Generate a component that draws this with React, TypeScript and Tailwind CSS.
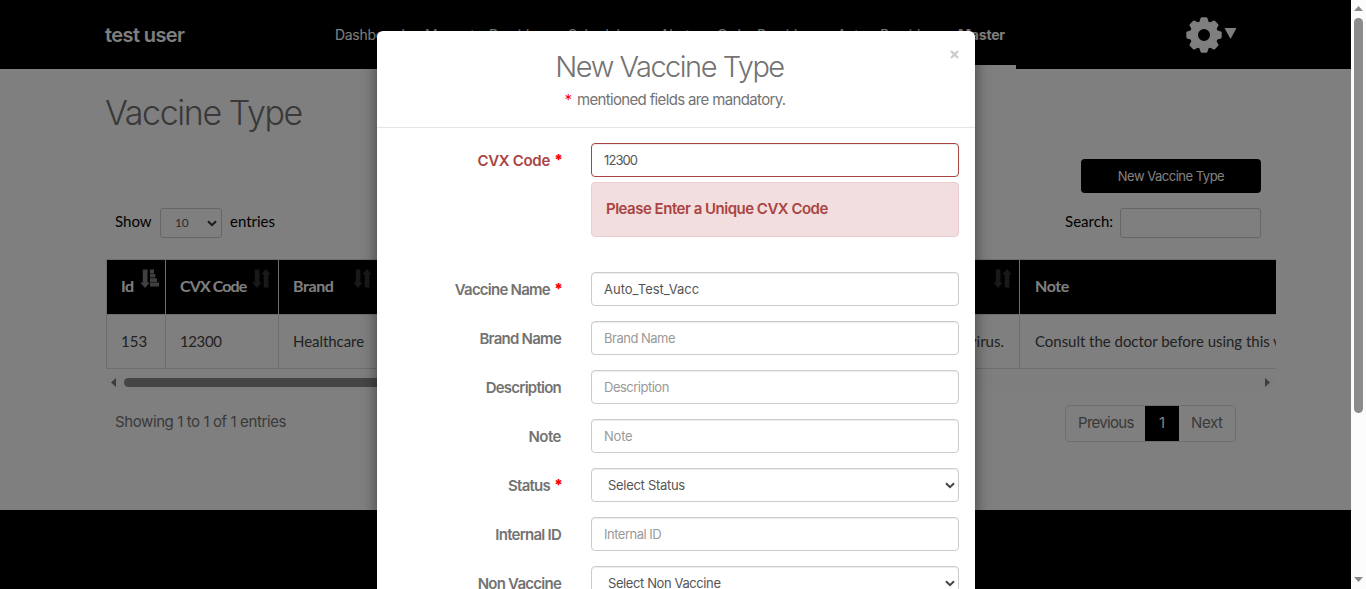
import React from "react";

const sans = "font-['Inter',sans-serif]";
const lato = "font-['Lato',sans-serif]";

const nav: { label: string; cls: string }[] = [
  { label: "Dashboard", cls: "w-[90px]" },
  { label: "Moment", cls: "w-[64px] tracking-[-0.9px]" },
  { label: "Providers", cls: "w-[79px]" },
  { label: "Scheduler", cls: "w-[92px]" },
  { label: "Alerts", cls: "w-[57px]" },
  { label: "Order Providers", cls: "w-[120px]" },
  { label: "Auto", cls: "w-[43px]" },
  { label: "Providers", cls: "w-[77px]" },
];

function Chevron({ className }: { className: string }) {
  return (
    <svg viewBox="0 0 10 7" className={className} fill="none" stroke="currentColor" strokeWidth="2">
      <path d="M1 1.2 5 5.2 9 1.2" />
    </svg>
  );
}

function SortBoth() {
  return (
    <svg width="19" height="20" viewBox="0 0 19 20" fill="#333" className="absolute right-[7px] top-[9px]">
      <path d="M2.800 .5h4.700v13h2.300L5 19 .2 13.500h2.600zM11.700 18.500h4.700v-13h2.400L14 0 9.200 5.500h2.500z" />
    </svg>
  );
}

function SortActive() {
  return (
    <svg width="19" height="20" viewBox="0 0 19 20" fill="#808080" className="absolute right-[6px] top-[9px]">
      <path d="M2.800 .5h4.700v13h2.300L5 19 .2 13.500h2.600zM10 .5h4v3.700h-4zM10 4.800h5.300v3.800h-5.300zM10 9.200h7v3.800H10zM10 13.600h9v4h-9z" />
    </svg>
  );
}

function Gear() {
  return (
    <svg width="36" height="36" viewBox="-18 -18 36 36" fill="#fff">
      {[0, 45, 90, 135, 180, 225, 270, 315].map((a) => (
        <path key={a} transform={`rotate(${a})`} d="M-5.500-10 L-3.400-17 Q-3-17.700-2-17.700 H2 Q3-17.700 3.400-17 L5.500-10Z" />
      ))}
      <path fillRule="evenodd" d="M0-14A14 14 0 1 1 0 14A14 14 0 1 1 0-14ZM0-6A6 6 0 1 0 0 6A6 6 0 1 0 0-6Z" />
    </svg>
  );
}

function Field({
  label,
  value,
  placeholder,
  required,
  select,
  error,
  track = "tracking-[-0.75px]",
  valueTrack = "tracking-[-0.2px]",
}: {
  label: string;
  value?: string;
  placeholder?: string;
  required?: boolean;
  select?: boolean;
  error?: boolean;
  track?: string;
  valueTrack?: string;
}) {
  return (
    <div className="flex h-[34px] items-center">
      <div
        className={`flex w-[184px] justify-end whitespace-nowrap pt-[2px] text-[15px] font-semibold ${
          error ? "text-[#a94442]" : "text-[#737373]"
        }`}
      >
        <span className={track}>{label}</span>
        {required && <span className="-mt-px ml-[4px] w-[7px] font-black text-[#f00]">*</span>}
      </div>
      <div
        className={`ml-[30px] flex h-[34px] w-[368px] items-center justify-between rounded-[4px] border bg-white text-[13px] shadow-[inset_0_1px_1px_rgba(0,0,0,0.075)] ${
          error ? "border-[#a94442]" : "border-[#ccc]"
        } ${select ? "pl-[16px] pr-[3px]" : "px-[12px]"} ${value ? "text-[#555]" : "text-[#999]"}`}
      >
        <span className={`pt-[2px] ${valueTrack}`}>{value ?? placeholder}</span>
        {select && <Chevron className="h-[7px] w-[10px] text-[#444]" />}
      </div>
    </div>
  );
}

export default function App() {
  return (
    <div className={`flex h-[589px] w-[1366px] overflow-hidden bg-white ${sans}`}>
      <div className="relative h-[589px] w-[1351px] overflow-hidden">
        <header className="flex h-[69px] bg-black text-white">
          <div className="w-[335px] pl-[105px] pt-[21px] text-[20px] font-semibold leading-[28px] tracking-[-0.6px]">
            test user
          </div>
          <nav className="flex w-[681px] pt-[25px] text-[14px] leading-[20px] tracking-[-0.3px]">
            {nav.map((n, i) => (
              <span key={i} className={`whitespace-nowrap ${n.cls}`}>
                {n.label}
              </span>
            ))}
            <span className="h-[44px] flex-1 border-b-4 border-white pl-[1px] font-bold tracking-[-0.2px]">Master</span>
          </nav>
          <div className="flex pl-[170px] pt-[17px]">
            <Gear />
            <svg width="13" height="12" viewBox="0 0 13 12" fill="#fff" className="ml-[2px] mt-[11px]">
              <path d="M.5 0h12l-6 11z" />
            </svg>
          </div>
        </header>

        <main className="h-[441px] bg-white pl-[105px] pt-[22px]">
          <h1 className="h-[44px] text-[34px] font-light leading-[44px] tracking-[-1.4px] text-[#737373]">Vaccine Type</h1>
          <div className="mt-[24px] flex w-[1156px] justify-end">
            <div className="flex h-[34px] w-[180px] items-center justify-center rounded-[4px] bg-black pt-[2px] text-[13px] tracking-[-0.5px] text-white">
              New Vaccine Type
            </div>
          </div>
          <div className={`ml-[1px] mt-[15px] flex h-[30px] w-[1155px] items-center justify-between text-[15px] text-black ${lato}`}>
            <div className="flex items-center pl-[9px]">
              <span className="w-[45px] pb-[3px]">Show</span>
              <div className="flex h-[30px] w-[62px] items-center justify-between rounded-[3px] border border-[#ccc] pl-[14px] pr-[4px] text-[12px] tracking-[-0.3px] text-[#555]">
                10
                <Chevron className="h-[7px] w-[10px] text-[#333]" />
              </div>
              <span className="ml-[8px] pb-[3px]">entries</span>
            </div>
            <div className="flex items-center">
              <span className="mr-[7px] pb-[3px]">Search:</span>
              <div className="h-[30px] w-[141px] rounded-[3px] border border-[#ccc]" />
            </div>
          </div>

          <div className={`ml-[1px] mt-[21px] w-[1170px] overflow-hidden border-l border-t border-[#ddd] ${lato}`}>
            <div className="flex h-[54px] w-[1300px] bg-black text-[16px] font-bold tracking-[-0.4px] text-white">
              <div className="relative w-[59px] border-r border-[#ddd] pl-[14px] pt-[14px]">Id<SortActive /></div>
              <div className="relative w-[113px] border-r border-[#ddd] pl-[14px] pt-[14px] tracking-[-0.9px]">CVX Code<SortBoth /></div>
              <div className="relative w-[101px] border-r border-[#ddd] pl-[14px] pt-[14px]">Brand<SortBoth /></div>
              <div className="relative w-[640px] border-r border-[#ddd] pl-[90px] pt-[14px]">Description<SortBoth /></div>
              <div className="flex-1 pl-[15px] pt-[14px]">Note</div>
            </div>
            <div className="flex h-[55px] w-[1300px] items-stretch whitespace-nowrap border-y border-[#ddd] text-[15px] leading-[52px] text-[#444]">
              <div className="w-[59px] border-r border-[#ddd] pl-[14px]">153</div>
              <div className="w-[113px] border-r border-[#ddd] pl-[14px] tracking-[-0.4px]">12300</div>
              <div className="w-[101px] border-r border-[#ddd] pl-[14px] tracking-[-0.05px]">Healthcare</div>
              <div className="w-[640px] border-r border-[#ddd] pr-[15px] text-right">Vaccine for protection against the virus.</div>
              <div className="flex-1 pl-[15px] tracking-[-0.03px]">Consult the doctor before using this vaccine</div>
            </div>
          </div>

          <div className="ml-[1px] mt-[6px] flex h-[15px] w-[1170px] items-center justify-between bg-[#fcfcfc] pl-[5px] pr-[6px]">
            <svg width="5" height="9" viewBox="0 0 5 9" fill="#7a7a7a"><path d="M5 0v9L0 4.500z" /></svg>
            <div className="ml-[8px] h-[9px] w-[800px] rounded-full bg-[#8b8b8b]" />
            <div className="flex-1" />
            <svg width="5" height="9" viewBox="0 0 5 9" fill="#7a7a7a"><path d="M0 0v9l5-4.500z" /></svg>
          </div>

          <div className="ml-[1px] mt-[15px] flex w-[1130px] justify-between pl-[9px] text-[15px] text-[#737373]">
            <span className="pt-[6px] tracking-[-0.4px]">Showing 1 to 1 of 1 entries</span>
            <div className="flex h-[37px] w-[171px] items-center overflow-hidden rounded-[4px] border border-[#ddd]">
              <span className="w-[79px] pl-[12px] tracking-[-0.7px]">Previous</span>
              <span className="flex h-[37px] w-[34px] items-center justify-center bg-black text-white">1</span>
              <span className="pl-[12px] tracking-[-0.4px]">Next</span>
            </div>
          </div>
        </main>
        <footer className="h-[79px] bg-black" />

        <div className="absolute inset-0 bg-black/50" />

        <section
          role="dialog"
          className="absolute left-[377px] top-[31px] h-[700px] w-[598px] rounded-[6px] bg-white shadow-[0_5px_15px_rgba(0,0,0,0.5)]"
        >
          <div className="relative h-[97px] border-b border-[#e5e5e5] pt-[15px] text-center text-[#737373]">
            <h2 className="pr-[13px] text-[29px] font-light leading-[42px] tracking-[-1.5px]">New Vaccine Type</h2>
            <p className="pr-[2px] pt-[1px] text-[15px] leading-[22px] tracking-[-0.65px]">
              <span className="mr-[2px] text-[#f00]">*</span> mentioned fields are mandatory.
            </p>
            <svg width="9" height="9" viewBox="0 0 9 9" className="absolute right-[16px] top-[19px]" stroke="#ccc" strokeWidth="2.400">
              <path d="M1 1l7 7M8 1 1 8" />
            </svg>
          </div>
          <form className="flex flex-col gap-[15px] pt-[15px]">
            <div className="h-[114px]">
              <Field label="CVX Code" value="12300" required error track="tracking-[-0.3px]" valueTrack="tracking-[-0.9px]" />
              <div className="ml-[214px] mt-[5px] flex h-[55px] w-[368px] items-center rounded-[4px] border border-[#ebccd1] bg-[#f2dede] pl-[14px] text-[15px] font-semibold tracking-[-0.5px] text-[#a94442]">
                Please Enter a Unique CVX Code
              </div>
            </div>
            <Field label="Vaccine Name" value="Auto_Test_Vacc" required valueTrack="tracking-[0px]" />
            <Field label="Brand Name" placeholder="Brand Name" valueTrack="tracking-[-0.5px]" />
            <Field label="Description" placeholder="Description" valueTrack="tracking-[-0.5px]" />
            <Field label="Note" placeholder="Note" track="tracking-[-0.5px]" />
            <Field label="Status" value="Select Status" required select valueTrack="tracking-[-0.3px]" />
            <Field label="Internal ID" placeholder="Internal ID" valueTrack="tracking-[-0.5px]" />
            <Field label="Non Vaccine" value="Select Non Vaccine" select valueTrack="tracking-[-0.4px]" />
          </form>
        </section>
      </div>

      <div className="flex h-[589px] w-[15px] flex-col items-center bg-[#fcfcfc] pt-[6px]">
        <svg width="9" height="5" viewBox="0 0 9 5" fill="#8b8b8b"><path d="M0 5h9L4.500 0z" /></svg>
        <div className="mt-[7px] h-[395px] w-[9px] rounded-full bg-[#8b8b8b]" />
        <svg width="9" height="5" viewBox="0 0 9 5" fill="#8b8b8b" className="mt-[164px]"><path d="M0 0h9L4.500 5z" /></svg>
      </div>
    </div>
  );
}
